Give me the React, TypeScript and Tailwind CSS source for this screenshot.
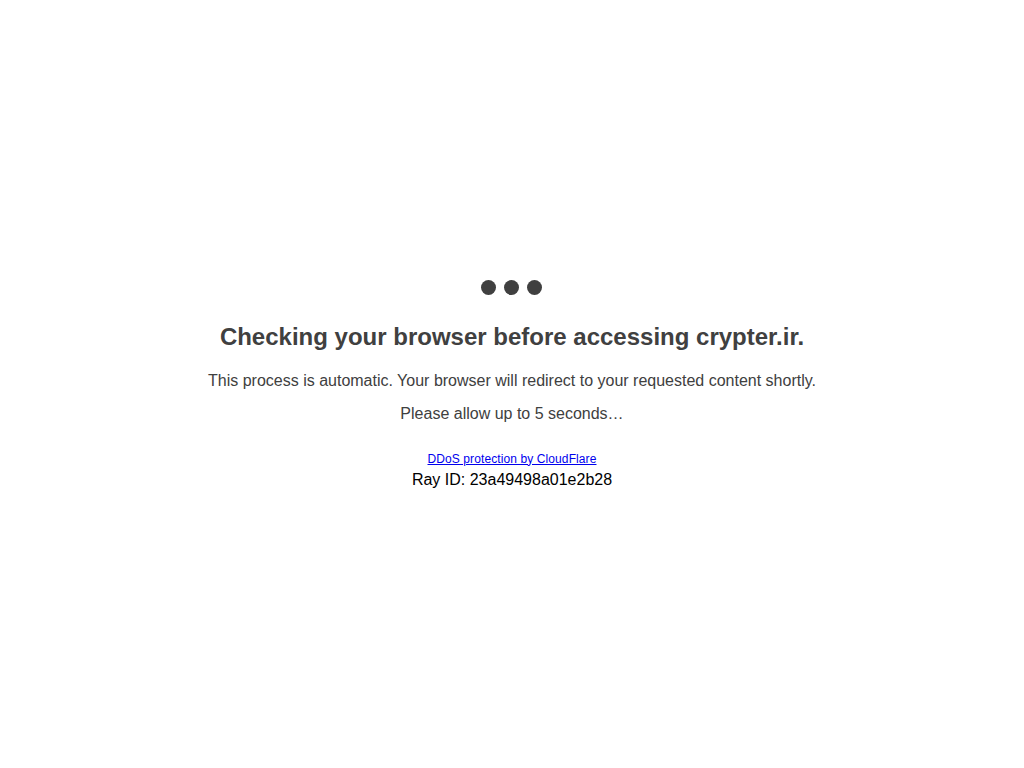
import React from 'react';

export default function App() {
  return (
    <div className="min-h-screen w-full bg-white flex items-center justify-center text-[#404040] font-['Liberation_Sans',Arial,sans-serif]">
      <div className="flex flex-col items-center text-center">
        {/* Loading dots */}
        <div className="flex gap-2">
          <div className="w-[15px] h-[15px] rounded-full bg-[#404040]" />
          <div className="w-[15px] h-[15px] rounded-full bg-[#404040]" />
          <div className="w-[15px] h-[15px] rounded-full bg-[#404040]" />
        </div>
        <h1 className="mt-[27px] text-[24px] leading-[30px] font-bold">
          Checking your browser before accessing crypter.ir.
        </h1>
        <p className="mt-[19px] text-[16px] leading-[20px]">
          This process is automatic. Your browser will redirect to your requested content shortly.
        </p>
        <p className="mt-[13px] text-[16px] leading-[20px]">Please allow up to 5 seconds…</p>
        <div className="mt-[28px] flex flex-col items-center">
          <a href="#" className="text-[12px] tracking-[0.1px] leading-[14px] text-[#0000ee] underline">
            DDoS protection by CloudFlare
          </a>
          <span className="mt-[5px] text-[16px] leading-[18px] text-black">Ray ID: 23a49498a01e2b28</span>
        </div>
      </div>
    </div>
  );
}
